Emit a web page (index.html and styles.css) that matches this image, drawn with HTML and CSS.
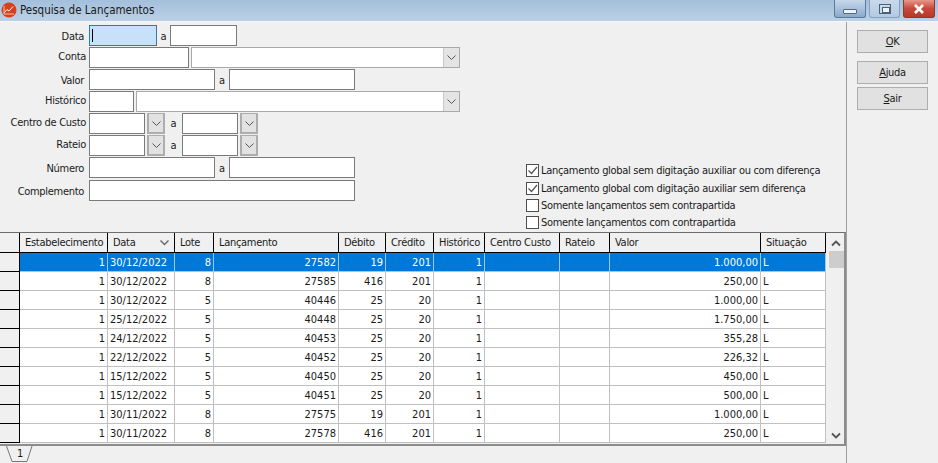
FILE: index.html
```html
<!DOCTYPE html>
<html lang="pt">
<head>
  <meta charset="UTF-8" />
  <title>Pesquisa de Lançamentos</title>
  <link rel="stylesheet" href="styles.css">
</head>
<body>
  <div class="titlebar">
    <svg class="app-icon" width="16" height="16" viewBox="0 0 16 16">
      <circle cx="8" cy="8" r="7.5" fill="#d8401c"/>
      <path d="M3 11 L6 7.5 L8 9 L12 4.5" fill="none" stroke="#fff" stroke-width="1"/>
      <path d="M3 4 V12 H13" fill="none" stroke="#f6b9a6" stroke-width="1"/>
    </svg>
    <span class="title-text">Pesquisa de Lançamentos</span>
    <div class="win-buttons">
      <div class="win-btn"><div class="min-glyph"></div></div>
      <div class="win-btn max"><div class="max-glyph"></div></div>
      <div class="win-btn close">
        <svg width="14" height="10" viewBox="0 0 14 10"><path d="M3 1 L11 9 M11 1 L3 9" stroke="#fff" stroke-width="2.6"/></svg>
      </div>
    </div>
  </div>

  <div class="main">
    <div class="left">
      <div class="filters">
        <div class="fields">
          <div class="row">
            <label class="lbl inset">Data</label>
            <div class="input focus w68"><span class="caret"></span></div>
            <span class="to short">a</span>
            <div class="input w67"></div>
          </div>
          <div class="row">
            <label class="lbl">Conta</label>
            <div class="input w100"></div>
            <div class="combo w269"><div class="drop"><svg width="9" height="5" viewBox="0 0 9 5"><path d="M0.5 0.5 L4.5 4.5 L8.5 0.5" fill="none" stroke="#555"/></svg></div></div>
          </div>
          <div class="row">
            <label class="lbl inset">Valor</label>
            <div class="input w126"></div>
            <span class="to">a</span>
            <div class="input w126"></div>
          </div>
          <div class="row">
            <label class="lbl">Histórico</label>
            <div class="input w45"></div>
            <div class="combo w324"><div class="drop"><svg width="9" height="5" viewBox="0 0 9 5"><path d="M0.5 0.5 L4.5 4.5 L8.5 0.5" fill="none" stroke="#555"/></svg></div></div>
          </div>
          <div class="row">
            <label class="lbl">Centro de Custo</label>
            <div class="input w56"></div>
            <div class="pick"><svg width="9" height="5" viewBox="0 0 9 5"><path d="M0.5 0.5 L4.5 4.5 L8.5 0.5" fill="none" stroke="#555"/></svg></div>
            <span class="to mid">a</span>
            <div class="input w56"></div>
            <div class="pick"><svg width="9" height="5" viewBox="0 0 9 5"><path d="M0.5 0.5 L4.5 4.5 L8.5 0.5" fill="none" stroke="#555"/></svg></div>
          </div>
          <div class="row">
            <label class="lbl">Rateio</label>
            <div class="input w56"></div>
            <div class="pick"><svg width="9" height="5" viewBox="0 0 9 5"><path d="M0.5 0.5 L4.5 4.5 L8.5 0.5" fill="none" stroke="#555"/></svg></div>
            <span class="to mid">a</span>
            <div class="input w56"></div>
            <div class="pick"><svg width="9" height="5" viewBox="0 0 9 5"><path d="M0.5 0.5 L4.5 4.5 L8.5 0.5" fill="none" stroke="#555"/></svg></div>
          </div>
          <div class="row">
            <label class="lbl inset">Número</label>
            <div class="input w126"></div>
            <span class="to">a</span>
            <div class="input w126"></div>
          </div>
          <div class="row last">
            <label class="lbl inset">Complemento</label>
            <div class="input w266"></div>
          </div>
        </div>
        <div class="checks">
          <div class="check"><span class="box"><svg width="11" height="11" viewBox="0 0 11 11"><path d="M1.5 5.5 L4.5 8.5 L10 2" fill="none" stroke="#555" stroke-width="1.2"/></svg></span>Lançamento global sem digitação auxiliar ou com diferença</div>
          <div class="check"><span class="box"><svg width="11" height="11" viewBox="0 0 11 11"><path d="M1.5 5.5 L4.5 8.5 L10 2" fill="none" stroke="#555" stroke-width="1.2"/></svg></span>Lançamento global com digitação auxiliar sem diferença</div>
          <div class="check"><span class="box"></span>Somente lançamentos sem contrapartida</div>
          <div class="check"><span class="box"></span>Somente lançamentos com contrapartida</div>
        </div>
      </div>

      <div class="grid-wrap">
        <table class="grid">
          <colgroup>
            <col class="c0"><col class="c1"><col class="c2"><col class="c3"><col class="c4"><col class="c5"><col class="c6"><col class="c7"><col class="c8"><col class="c9"><col class="c10"><col class="c11">
          </colgroup>
          <thead>
            <tr>
              <th class="ind"></th>
              <th>Estabelecimento</th>
              <th class="sorted">Data<svg class="sort" width="9" height="6" viewBox="0 0 9 6"><path d="M0.5 0.5 L4.5 4.5 L8.5 0.5" fill="none" stroke="#666" stroke-width="1.4"/></svg></th>
              <th>Lote</th>
              <th>Lançamento</th>
              <th>Débito</th>
              <th>Crédito</th>
              <th>Histórico</th>
              <th>Centro Custo</th>
              <th>Rateio</th>
              <th>Valor</th>
              <th>Situação</th>
            </tr>
          </thead>
          <tbody>
            <tr class="sel"><td class="ind"></td><td>1</td><td class="l">30/12/2022</td><td>8</td><td>27582</td><td>19</td><td>201</td><td>1</td><td></td><td></td><td>1.000,00</td><td class="l">L</td></tr>
            <tr><td class="ind"></td><td>1</td><td class="l">30/12/2022</td><td>8</td><td>27585</td><td>416</td><td>201</td><td>1</td><td></td><td></td><td>250,00</td><td class="l">L</td></tr>
            <tr><td class="ind"></td><td>1</td><td class="l">30/12/2022</td><td>5</td><td>40446</td><td>25</td><td>20</td><td>1</td><td></td><td></td><td>1.000,00</td><td class="l">L</td></tr>
            <tr><td class="ind"></td><td>1</td><td class="l">25/12/2022</td><td>5</td><td>40448</td><td>25</td><td>20</td><td>1</td><td></td><td></td><td>1.750,00</td><td class="l">L</td></tr>
            <tr><td class="ind"></td><td>1</td><td class="l">24/12/2022</td><td>5</td><td>40453</td><td>25</td><td>20</td><td>1</td><td></td><td></td><td>355,28</td><td class="l">L</td></tr>
            <tr><td class="ind"></td><td>1</td><td class="l">22/12/2022</td><td>5</td><td>40452</td><td>25</td><td>20</td><td>1</td><td></td><td></td><td>226,32</td><td class="l">L</td></tr>
            <tr><td class="ind"></td><td>1</td><td class="l">15/12/2022</td><td>5</td><td>40450</td><td>25</td><td>20</td><td>1</td><td></td><td></td><td>450,00</td><td class="l">L</td></tr>
            <tr><td class="ind"></td><td>1</td><td class="l">15/12/2022</td><td>5</td><td>40451</td><td>25</td><td>20</td><td>1</td><td></td><td></td><td>500,00</td><td class="l">L</td></tr>
            <tr><td class="ind"></td><td>1</td><td class="l">30/11/2022</td><td>8</td><td>27575</td><td>19</td><td>201</td><td>1</td><td></td><td></td><td>1.000,00</td><td class="l">L</td></tr>
            <tr><td class="ind"></td><td>1</td><td class="l">30/11/2022</td><td>8</td><td>27578</td><td>416</td><td>201</td><td>1</td><td></td><td></td><td>250,00</td><td class="l">L</td></tr>
          </tbody>
        </table>
        <div class="scrollbar">
          <svg class="arrow" width="10" height="7" viewBox="0 0 10 7"><path d="M1 5.5 L5 1.5 L9 5.5" fill="none" stroke="#555" stroke-width="1.8"/></svg>
          <div class="thumb"></div>
          <svg class="arrow down" width="10" height="7" viewBox="0 0 10 7"><path d="M1 1.5 L5 5.5 L9 1.5" fill="none" stroke="#555" stroke-width="1.8"/></svg>
        </div>
      </div>

      <div class="tabs">
        <div class="tab">
          <svg width="27" height="17" viewBox="0 0 27 17"><path d="M0.5 0 L6 15.5 H21 L26 0" fill="#f0f0f0" stroke="#777"/></svg>
          <span class="tab-label">1</span>
        </div>
      </div>
    </div>

    <div class="actions">
      <div class="btn ok"><span><u>O</u>K</span></div>
      <div class="btn"><span><u>A</u>juda</span></div>
      <div class="btn"><span><u>S</u>air</span></div>
    </div>
  </div>
</body>
</html>
```

FILE: styles.css
```css
* { box-sizing: border-box; }

html, body {
  height: 100%;
}

body {
  margin: 0;
  width: 938px;
  height: 463px;
  overflow: hidden;
  display: flex;
  flex-direction: column;
  background-color: #f0f0f0;
  color: #1a1a1a;
  font-family: "DejaVu Sans Condensed", "DejaVu Sans", sans-serif;
  font-size: 11px;
  letter-spacing: -0.3px;
}

/* Title bar */
.titlebar {
  height: 22px;
  flex: none;
  display: flex;
  align-items: flex-start;
  background: linear-gradient(to bottom, #a3bfdb, #bcd1e6);
  border-bottom: 1px solid #f4f7fa;
}

.app-icon {
  margin: 2px 0 0 1px;
}

.title-text {
  margin: 3px 0 0 3px;
  font-size: 11.5px;
  line-height: 14px;
  letter-spacing: 0;
}

.win-buttons {
  margin-left: auto;
  margin-right: 3px;
  display: flex;
  gap: 3px;
}

.win-btn {
  width: 32px;
  height: 18px;
  display: flex;
  align-items: center;
  justify-content: center;
  border: 1px solid #5b7a9c;
  border-top: none;
  border-radius: 0 0 3px 3px;
  background: linear-gradient(to bottom, #c6d8ea, #a8c2dc 50%, #8aa9ca);
}

.win-btn.max {
  width: 31px;
  border-color: #85a1bf;
  background: linear-gradient(to bottom, #c8d9ea, #b4cbe2);
}

.win-btn.close {
  border-color: #8b3a30;
  background: linear-gradient(to bottom, #e6988a, #c9483a 50%, #b5382b);
}

.min-glyph {
  width: 14px;
  height: 5px;
  margin-top: 5px;
  background-color: #eef3f8;
  border: 1px solid #54687e;
  border-radius: 1px;
}

.max-glyph {
  width: 12px;
  height: 10px;
  border: 1px solid #4c6076;
  background-color: #c8d9ea;
  position: relative;
}

.max-glyph::after {
  content: "";
  position: absolute;
  left: 2px;
  top: 2px;
  width: 6px;
  height: 4px;
  border: 1px solid #4c6076;
  background-color: #eef3f8;
}

/* Main area */
.main {
  flex: 1;
  display: flex;
  min-height: 0;
}

.left {
  width: 846px;
  display: flex;
  flex-direction: column;
}

.filters {
  height: 210px;
  flex: none;
  padding-top: 3px;
  display: flex;
}

.fields {
  width: 526px;
  flex: none;
}

.row {
  height: 22px;
  display: flex;
  align-items: flex-start;
}

.row.last {
  margin-top: 1px;
}

.lbl {
  width: 89px;
  flex: none;
  padding-right: 3px;
  text-align: right;
  line-height: 20px;
}

.lbl.inset {
  padding-right: 5px;
  padding-top: 2px;
}

.input {
  height: 21px;
  flex: none;
  background-color: #fff;
  border: 1px solid #7a7a7a;
}

.input.focus {
  background-color: #c6e1f8;
  border-color: #2d7ca8;
  position: relative;
}

.caret {
  position: absolute;
  left: 2px;
  top: 3px;
  width: 1px;
  height: 13px;
  background-color: #000;
}

.w45 { width: 45px; margin-right: 2px; }
.w56 { width: 56px; }
.w67 { width: 67px; }
.w68 { width: 68px; }
.w100 { width: 100px; margin-right: 2px; }
.w126 { width: 126px; }
.w266 { width: 266px; }
.w269 { width: 269px; }
.w324 { width: 324px; }

.to {
  width: 14px;
  flex: none;
  padding-top: 1px;
  text-align: center;
  line-height: 21px;
}

.to.short {
  width: 13px;
}

.to.mid {
  width: 17px;
  padding-top: 0;
}

.combo {
  height: 21px;
  flex: none;
  display: flex;
  justify-content: flex-end;
  background-color: #fff;
  border: 1px solid #a9a9a9;
}

.drop {
  width: 16px;
  display: flex;
  align-items: center;
  justify-content: center;
  background-color: #e4e4e4;
  border-left: 1px solid #c8c8c8;
}

.pick {
  width: 18px;
  height: 21px;
  flex: none;
  margin-left: 2px;
  display: flex;
  align-items: center;
  justify-content: center;
  background-color: #e2e2e2;
  border: 2px solid #adadad;
  border-top-width: 1px;
}

.checks {
  margin-top: 137px;
}

.check {
  height: 17.4px;
  display: flex;
  align-items: center;
  gap: 2px;
  white-space: nowrap;
}

.box {
  width: 13px;
  height: 13px;
  flex: none;
  display: flex;
  align-items: center;
  justify-content: center;
  background-color: #fff;
  border: 1px solid #4d4d4d;
}

/* Grid */
.grid-wrap {
  height: 214px;
  flex: none;
  display: flex;
  border-top: 1px solid #6d6d6d;
  border-bottom: 2px solid #8c8c8c;
  border-right: 2px solid #8c8c8c;
  overflow: hidden;
}

.grid {
  width: 826px;
  flex: none;
  table-layout: fixed;
  border-collapse: separate;
  border-spacing: 0;
  align-self: flex-start;
}

.c0 { width: 20px; }
.c1 { width: 88px; }
.c2 { width: 67px; }
.c3 { width: 39px; }
.c4 { width: 125px; }
.c5 { width: 47px; }
.c6 { width: 48px; }
.c7 { width: 51px; }
.c8 { width: 75px; }
.c9 { width: 50px; }
.c10 { width: 151px; }
.c11 { width: 65px; }

.grid th {
  height: 20px;
  padding: 0 0 0 5px;
  font-weight: normal;
  text-align: left;
  white-space: nowrap;
  overflow: hidden;
  background-color: #f0f0f0;
  border-right: 1px solid #000;
  border-bottom: 1px solid #000;
}

.grid th.sorted {
  position: relative;
}

.sort {
  position: absolute;
  right: 5px;
  top: 7px;
}

.grid td {
  height: 19px;
  padding: 0 2px 0 0;
  text-align: right;
  white-space: nowrap;
  overflow: hidden;
  letter-spacing: 0;
  background-color: #fff;
  border-right: 1px solid #c0c0c0;
  border-bottom: 1px solid #c0c0c0;
}

.grid td.l {
  padding: 0 0 0 2px;
  text-align: left;
}

.grid .ind,
.grid td.ind {
  padding: 0;
  background-color: #f0f0f0;
  border-right: 1px solid #000;
  border-bottom: 1px solid #000;
}

.grid tr.sel td {
  color: #fff;
  background-color: #0078d7;
  border-right-color: #9cc6ea;
  border-bottom-color: #9cc6ea;
}

.grid tr.sel td.ind {
  background-color: #f0f0f0;
  border-right-color: #000;
  border-bottom-color: #000;
}

.scrollbar {
  flex: 1;
  margin-left: 2px;
  display: flex;
  flex-direction: column;
  align-items: center;
  position: relative;
}

.arrow {
  margin-top: 7px;
}

.thumb {
  width: 15px;
  height: 17px;
  margin-top: 4px;
  background-color: #cdcdcd;
}

.arrow.down {
  position: absolute;
  bottom: 5px;
}

/* Tabs */
.tabs {
  flex: 1;
  padding-left: 6px;
}

.tab {
  width: 27px;
  height: 17px;
  position: relative;
}

.tab-label {
  position: absolute;
  left: 11px;
  top: 0;
  line-height: 15px;
}

/* Right side buttons */
.actions {
  width: 92px;
  flex: none;
  padding: 8px 10px 0 10px;
  display: flex;
  flex-direction: column;
  gap: 3px;
  border-left: 1px solid #a0a0a0;
}

.btn {
  height: 23px;
  display: flex;
  align-items: center;
  justify-content: center;
  background-color: #e1e1e1;
  border: 1px solid #adadad;
}

.btn.ok {
  margin-bottom: 5px;
}
```
